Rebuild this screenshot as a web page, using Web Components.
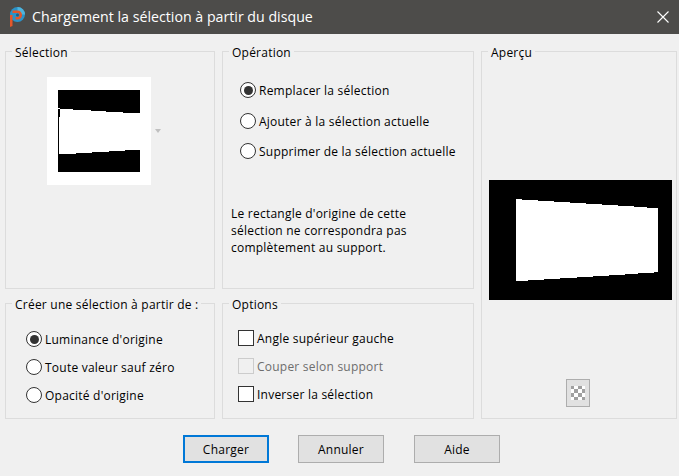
<!DOCTYPE html>
<html lang="fr">
<head>
<meta charset="utf-8">
<title>Chargement la sélection à partir du disque</title>
<style>
html, body { margin: 0; height: 100%; background: #f0f0f0; overflow: hidden; }
body { font: 12px "Open Sans", sans-serif; letter-spacing: .23px; color: #000; }
</style>
</head>
<body>
<load-dialog></load-dialog>

<script>
// small helper, every element here is just a style block + markup
function shadow(el, html) {
    el.attachShadow({ mode: 'open' }).innerHTML = html
}

class TitleBar extends HTMLElement {
    constructor() {
        super()
        shadow(this, `<style>
            :host { display: flex; align-items: center; height: 34px; background: #4d4c4a; color: #fff; font-size: 14.2px; letter-spacing: 0; }
            .logo { margin: 0 7px 0 9px; flex: none; }
            .text { flex: 1; white-space: nowrap; margin-top: -2px; }
            .close { margin-right: 10px; flex: none; }
        </style>
        <svg class="logo" width="16" height="20" viewBox="0 0 16 20">
            <circle cx="8.5" cy="7.5" r="7.5" fill="#2b93c9"/>
            <path d="M8.500 0a7.500 7.500 0 0 1 7.500 7.500h-4a3.500 3.500 0 0 0-3.500-3.500z" fill="#4fb4dc"/>
            <path d="M1 8h2.500v11L1 20zM3.500 3.500h5a4.500 4.500 0 0 1 0 9h-2v-2.500h2a2 2 0 0 0 0-4h-5z" fill="#e4572a"/>
            <circle cx="8.500" cy="8" r="1.500" fill="#1f5f86"/>
        </svg>
        <span class="text"><slot></slot></span>
        <svg class="close" width="12" height="12" viewBox="0 0 12 12">
            <path d="M.5.500l11 11M11.500.500l-11 11" stroke="#fff" stroke-width="1.100" fill="none"/>
        </svg>`)
    }
}

class GroupBox extends HTMLElement {
    constructor() {
        super()
        shadow(this, `<style>
            :host { display: block; position: relative; box-sizing: border-box; border: 1px solid #dcdcdc; min-width: 0; }
            .legend { position: absolute; left: 6px; top: -8px; padding: 0 3px; background: #f0f0f0; line-height: 17px; white-space: nowrap; }
        </style>
        <div class="legend">${this.getAttribute('label')}</div>
        <slot></slot>`)
    }
}

class RadioOption extends HTMLElement {
    constructor() {
        super()
        const on = this.hasAttribute('checked')
        shadow(this, `<style>
            :host { display: flex; align-items: center; height: 16px; line-height: 16px; white-space: nowrap; }
            .ring { box-sizing: border-box; width: 16px; height: 16px; margin-right: 3px; flex: none;
                    border: 1.300px solid #333; border-radius: 50%; background: #fff;
                    display: flex; align-items: center; justify-content: center; }
            .dot { width: 9px; height: 9px; border-radius: 50%; background: #333; }
            .label { margin-top: 2px; }
        </style>
        <span class="ring">${on ? '<span class="dot"></span>' : ''}</span><span class="label"><slot></slot></span>`)
    }
}

class CheckOption extends HTMLElement {
    constructor() {
        super()
        shadow(this, `<style>
            :host { display: flex; align-items: center; height: 16px; line-height: 16px; white-space: nowrap; }
            :host([disabled]) { color: #6d6d6d; }
            .box { box-sizing: border-box; width: 16px; height: 16px; margin-right: 3px; flex: none;
                   border: 1px solid #333; background: #fff; }
            :host([disabled]) .box { border-color: #ccc; background: #f0f0f0; }
            .label { margin-top: 2px; }
        </style>
        <span class="box"></span><span class="label"><slot></slot></span>`)
    }
}

class PushButton extends HTMLElement {
    constructor() {
        super()
        shadow(this, `<style>
            :host { display: flex; align-items: center; justify-content: center; box-sizing: border-box;
                    width: 86px; height: 28px; background: #e1e1e1; border: 1px solid #adadad; }
            :host([default]) { border: 2px solid #0078d7; }
        </style>
        <slot></slot>`)
    }
}

class CheckerButton extends HTMLElement {
    constructor() {
        super()
        shadow(this, `<style>
            :host { display: flex; align-items: center; justify-content: center; box-sizing: border-box;
                    width: 24px; height: 28px; background: #e1e1e1; border: 1px solid #adadad; }
        </style>
        <svg width="14" height="14" viewBox="0 0 14 14" shape-rendering="crispEdges">
            <rect width="14" height="14" fill="#fff"/>
            <path d="M0 0h3v3H0zM7 0h4v3H7zM3 3h4v4H3zM11 3h3v4h-3zM0 7h3v4H0zM7 7h4v4H7zM3 11h4v3H3zM11 11h3v3h-3z" fill="#a0a0a0"/>
        </svg>`)
    }
}

// the thumbnail on the left, black square with the stepped white shape
class SelectionThumb extends HTMLElement {
    constructor() {
        super()
        shadow(this, `<style>
            :host { display: block; width: 104px; height: 108px; }
            svg { display: block; }
        </style>
        <svg width="104" height="108" viewBox="47 77 104 108" shape-rendering="crispEdges">
            <rect x="47" y="77" width="104" height="108" fill="#fff"/>
            <rect x="58" y="90" width="82" height="82" fill="#000"/>
            <path fill="#fff" d="M58 108H60V109H73V110H91V111H106V112H123V113H140V150H125V151H109V152H92V153H76V154H59V117H60V109H58Z"/>
        </svg>`)
    }
}

class SelectionPreview extends HTMLElement {
    constructor() {
        super()
        shadow(this, `<style>
            :host { display: block; width: 183px; height: 120px; }
            svg { display: block; }
        </style>
        <svg width="183" height="120" viewBox="489 180 183 120" shape-rendering="crispEdges">
            <rect x="489" y="180" width="183" height="120" fill="#000"/>
            <path fill="#fff" d="M516 199H522V200H538V201H554V202H570V203H586V204H602V205H618V206H634V207H647V208H658V272H654V273H638V274H625V275H609V276H593V277H577V278H560V279H544V280H528V281H516Z"/>
        </svg>`)
    }
}

class LoadDialog extends HTMLElement {
    constructor() {
        super()
        shadow(this, `<style>
            :host { display: block; height: 476px; }
            .groups { display: grid; grid-template-columns: 210px 252px 196px; grid-template-rows: 238px 116px;
                      column-gap: 7px; row-gap: 14px; padding: 17px 0 0 5px; }
            .apercu { grid-column: 3; grid-row: 1 / 3; padding: 128px 0 0 7px; }
            .apercu checker-button { margin: 79px 0 0 77px; }
            .thumb-row { display: flex; align-items: center; padding: 25px 0 0 41px; }
            .arrow { width: 0; height: 0; margin: 0 0 0 4px; border: 3px solid transparent; border-top: 4px solid #c0c0c0; border-bottom: 0; }
            .list { display: flex; flex-direction: column; }
            .op { padding: 30px 0 0 17px; gap: 14.500px; }
            .src { padding: 27px 0 0 20px; gap: 12px; }
            .opts { padding: 26px 0 0 15px; gap: 12px; }
            .note { margin: 46px 0 0 8px; line-height: 17px; width: 200px; }
            .buttons { display: flex; padding: 16px 0 0 183px; }
            .buttons push-button + push-button { margin-left: 29px; }
            .buttons push-button:last-child { margin-left: 30px; }
        </style>
        <title-bar>Chargement la sélection à partir du disque</title-bar>
        <div class="groups">
            <group-box label="Sélection">
                <div class="thumb-row"><selection-thumb></selection-thumb><span class="arrow"></span></div>
            </group-box>
            <group-box label="Opération">
                <div class="list op">
                    <radio-option checked>Remplacer la sélection</radio-option>
                    <radio-option>Ajouter à la sélection actuelle</radio-option>
                    <radio-option>Supprimer de la sélection actuelle</radio-option>
                </div>
                <div class="note">Le rectangle d'origine de cette sélection ne correspondra pas complètement au support.</div>
            </group-box>
            <group-box class="apercu" label="Aperçu">
                <selection-preview></selection-preview>
                <checker-button></checker-button>
            </group-box>
            <group-box label="Créer une sélection à partir de :">
                <div class="list src">
                    <radio-option checked>Luminance d'origine</radio-option>
                    <radio-option>Toute valeur sauf zéro</radio-option>
                    <radio-option>Opacité d'origine</radio-option>
                </div>
            </group-box>
            <group-box label="Options">
                <div class="list opts">
                    <check-option>Angle supérieur gauche</check-option>
                    <check-option disabled>Couper selon support</check-option>
                    <check-option>Inverser la sélection</check-option>
                </div>
            </group-box>
        </div>
        <div class="buttons">
            <push-button default>Charger</push-button>
            <push-button>Annuler</push-button>
            <push-button>Aide</push-button>
        </div>`)
    }
}

customElements.define('title-bar', TitleBar)
customElements.define('group-box', GroupBox)
customElements.define('radio-option', RadioOption)
customElements.define('check-option', CheckOption)
customElements.define('push-button', PushButton)
customElements.define('checker-button', CheckerButton)
customElements.define('selection-thumb', SelectionThumb)
customElements.define('selection-preview', SelectionPreview)
customElements.define('load-dialog', LoadDialog)
</script>
</body>
</html>
